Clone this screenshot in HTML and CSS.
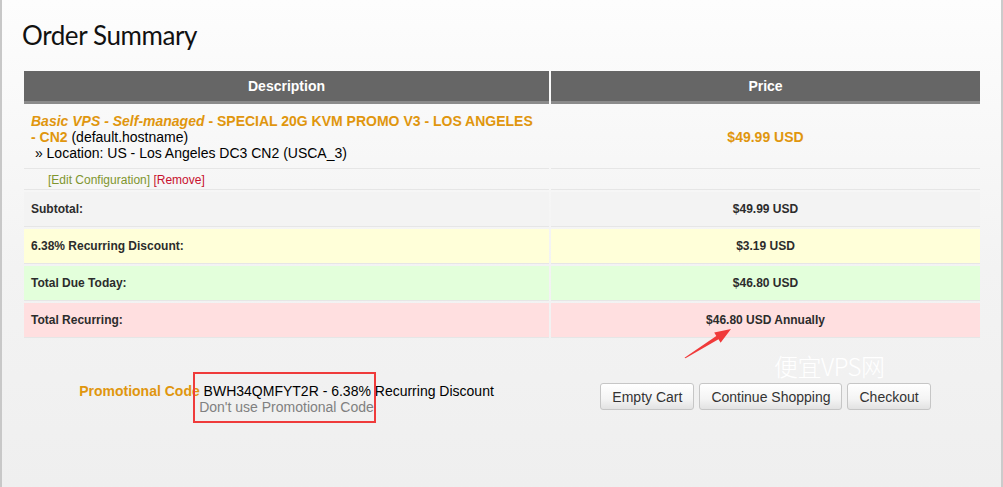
FILE: index.html
```html
<!DOCTYPE html>
<html lang="en">

<head>
    <meta charset="UTF-8">
    <title>Order Summary</title>
    <link rel="stylesheet" href="styles.css">
</head>

<body>
<div class="page">
    <h1 class="page__title">Order Summary</h1>

    <table class="cart">
        <colgroup>
            <col class="cart__col-desc">
            <col class="cart__col-price">
        </colgroup>
        <thead>
            <tr>
                <th>Description</th>
                <th>Price</th>
            </tr>
        </thead>
        <tbody>
            <tr class="cart__item">
                <td class="cart__desc">
                    <strong class="cart__product"><em>Basic VPS - Self-managed</em> - SPECIAL 20G KVM PROMO V3 - LOS ANGELES - CN2</strong> (default.hostname)<br>
                    &nbsp;&raquo; Location: US - Los Angeles DC3 CN2 (USCA_3)
                </td>
                <td class="cart__amount cart__amount--main">$49.99 USD</td>
            </tr>
            <tr class="cart__links">
                <td><a class="link-edit" href="#">[Edit Configuration]</a> <a class="link-remove" href="#">[Remove]</a></td>
                <td></td>
            </tr>
            <tr class="cart__sum cart__sum--sub">
                <td>Subtotal:</td>
                <td class="cart__amount">$49.99 USD</td>
            </tr>
            <tr class="cart__sum cart__sum--discount">
                <td>6.38% Recurring Discount:</td>
                <td class="cart__amount">$3.19 USD</td>
            </tr>
            <tr class="cart__sum cart__sum--today">
                <td>Total Due Today:</td>
                <td class="cart__amount">$46.80 USD</td>
            </tr>
            <tr class="cart__sum cart__sum--recurring">
                <td>Total Recurring:</td>
                <td class="cart__amount">$46.80 USD Annually</td>
            </tr>
        </tbody>
    </table>

    <div class="footer">
        <div class="promo">
            <span class="promo__label">Promotional Code</span> BWH34QMFYT2R - 6.38% Recurring Discount<br>
            <a class="promo__remove" href="#">Don't use Promotional Code</a>
            <span class="promo__mark"></span>
        </div>
        <div class="actions">
            <button class="btn" type="button">Empty Cart</button>
            <button class="btn" type="button">Continue Shopping</button>
            <button class="btn" type="button">Checkout</button>
        </div>
    </div>

    <svg class="arrow" width="60" height="40" viewBox="0 0 60 40" xmlns="http://www.w3.org/2000/svg">
        <path d="M1.5 36.7L33.3 14.9L31.2 11.5L48 8L37.6 21.7L35.5 18.3L2.5 37.3Z" fill="#f03a3a" />
    </svg>
    <span class="watermark">便宜VPS网</span>
</div>
</body>

</html>
```

FILE: styles.css
```css
body {
  margin: 0;
  padding: 0;
  font-family: "Liberation Sans", Arial, sans-serif;
  font-size: 14px;
  color: #000000;
}

.page {
  position: relative;
  height: 487px;
  box-sizing: border-box;
  border-left: 2px solid #c8c8c8;
  border-right: 2px solid #cbcbcb;
  background: linear-gradient(180deg, #fdfdfd 0%, #f3f3f3 55%, #efefef 100%);
  overflow: hidden;
}

.page__title {
  margin: 0;
  padding: 18px 0 0 20px;
  height: 69px;
  box-sizing: border-box;
  font-family: Lato, "Open Sans", sans-serif;
  font-weight: 400;
  font-size: 26px;
  line-height: 34px;
  letter-spacing: -0.4px;
  color: #111111;
}

.cart {
  margin-left: 20px;
  width: 960px;
  table-layout: fixed;
  border-collapse: separate;
  border-spacing: 2px;
}

.cart__col-desc {
  width: 525px;
}

.cart__col-price {
  width: 429px;
}

.cart th {
  height: 30px;
  padding: 0;
  background-color: #666666;
  border-bottom: 3px solid #8b8b8b;
  color: #ffffff;
  font-size: 14px;
  font-weight: 700;
  text-align: center;
}

.cart td {
  padding: 0 7px;
  border-bottom: 1px solid #e6e6e6;
  vertical-align: middle;
}

.cart__item td {
  height: 63px;
  box-sizing: border-box;
  padding-top: 7px;
  padding-bottom: 7px;
  line-height: 16px;
}

.cart__desc {
  padding-right: 14px;
}

.cart .cart__desc {
  padding-right: 14px;
}

.cart__product {
  color: #e0960e;
}

.cart__amount {
  text-align: center;
}

.cart__amount--main {
  color: #e0960e;
  font-weight: 700;
}

.cart__links td {
  height: 19px;
  box-sizing: border-box;
  padding-left: 24px;
  font-size: 12px;
}

.link-edit {
  color: #7f952e;
  text-decoration: none;
}

.link-remove {
  color: #c8102e;
  text-decoration: none;
}

.cart__sum td {
  height: 35px;
  box-sizing: border-box;
  font-size: 12px;
  font-weight: 700;
  color: #2c2c2c;
}

.cart__sum--sub td {
  background-color: #f3f3f3;
}

.cart__sum--discount td {
  background-color: #ffffd9;
}

.cart__sum--today td {
  background-color: #e3ffdb;
}

.cart__sum--recurring td {
  background-color: #ffdfe0;
}

.footer {
  display: flex;
  gap: 2px;
  margin: 43px 0 0 22px;
}

.promo {
  position: relative;
  width: 525px;
  text-align: center;
  line-height: 16px;
}

.promo__label {
  color: #e0960e;
  font-weight: 700;
}

.promo__remove {
  color: #808080;
  text-decoration: none;
}

.promo__mark {
  position: absolute;
  left: 169px;
  top: -11px;
  width: 183px;
  height: 51px;
  box-sizing: border-box;
  border: 2px solid #ef3b3b;
}

.actions {
  display: flex;
  justify-content: center;
  gap: 5px;
  width: 429px;
}

.btn {
  height: 27px;
  padding: 0 11px;
  border: 1px solid #c6c6c6;
  border-radius: 3px;
  background: linear-gradient(180deg, #ffffff 0%, #f4f4f4 60%, #e2e2e2 100%);
  font-family: "Liberation Sans", Arial, sans-serif;
  font-size: 14px;
  color: #333333;
}

.arrow {
  position: absolute;
  left: 681px;
  top: 321px;
}

.watermark {
  position: absolute;
  left: 772px;
  top: 351px;
  font-family: "Noto Sans CJK SC", "Noto Sans", sans-serif;
  font-weight: 300;
  font-size: 24px;
  line-height: 30px;
  color: #ffffff;
  letter-spacing: -0.5px;
}
```
